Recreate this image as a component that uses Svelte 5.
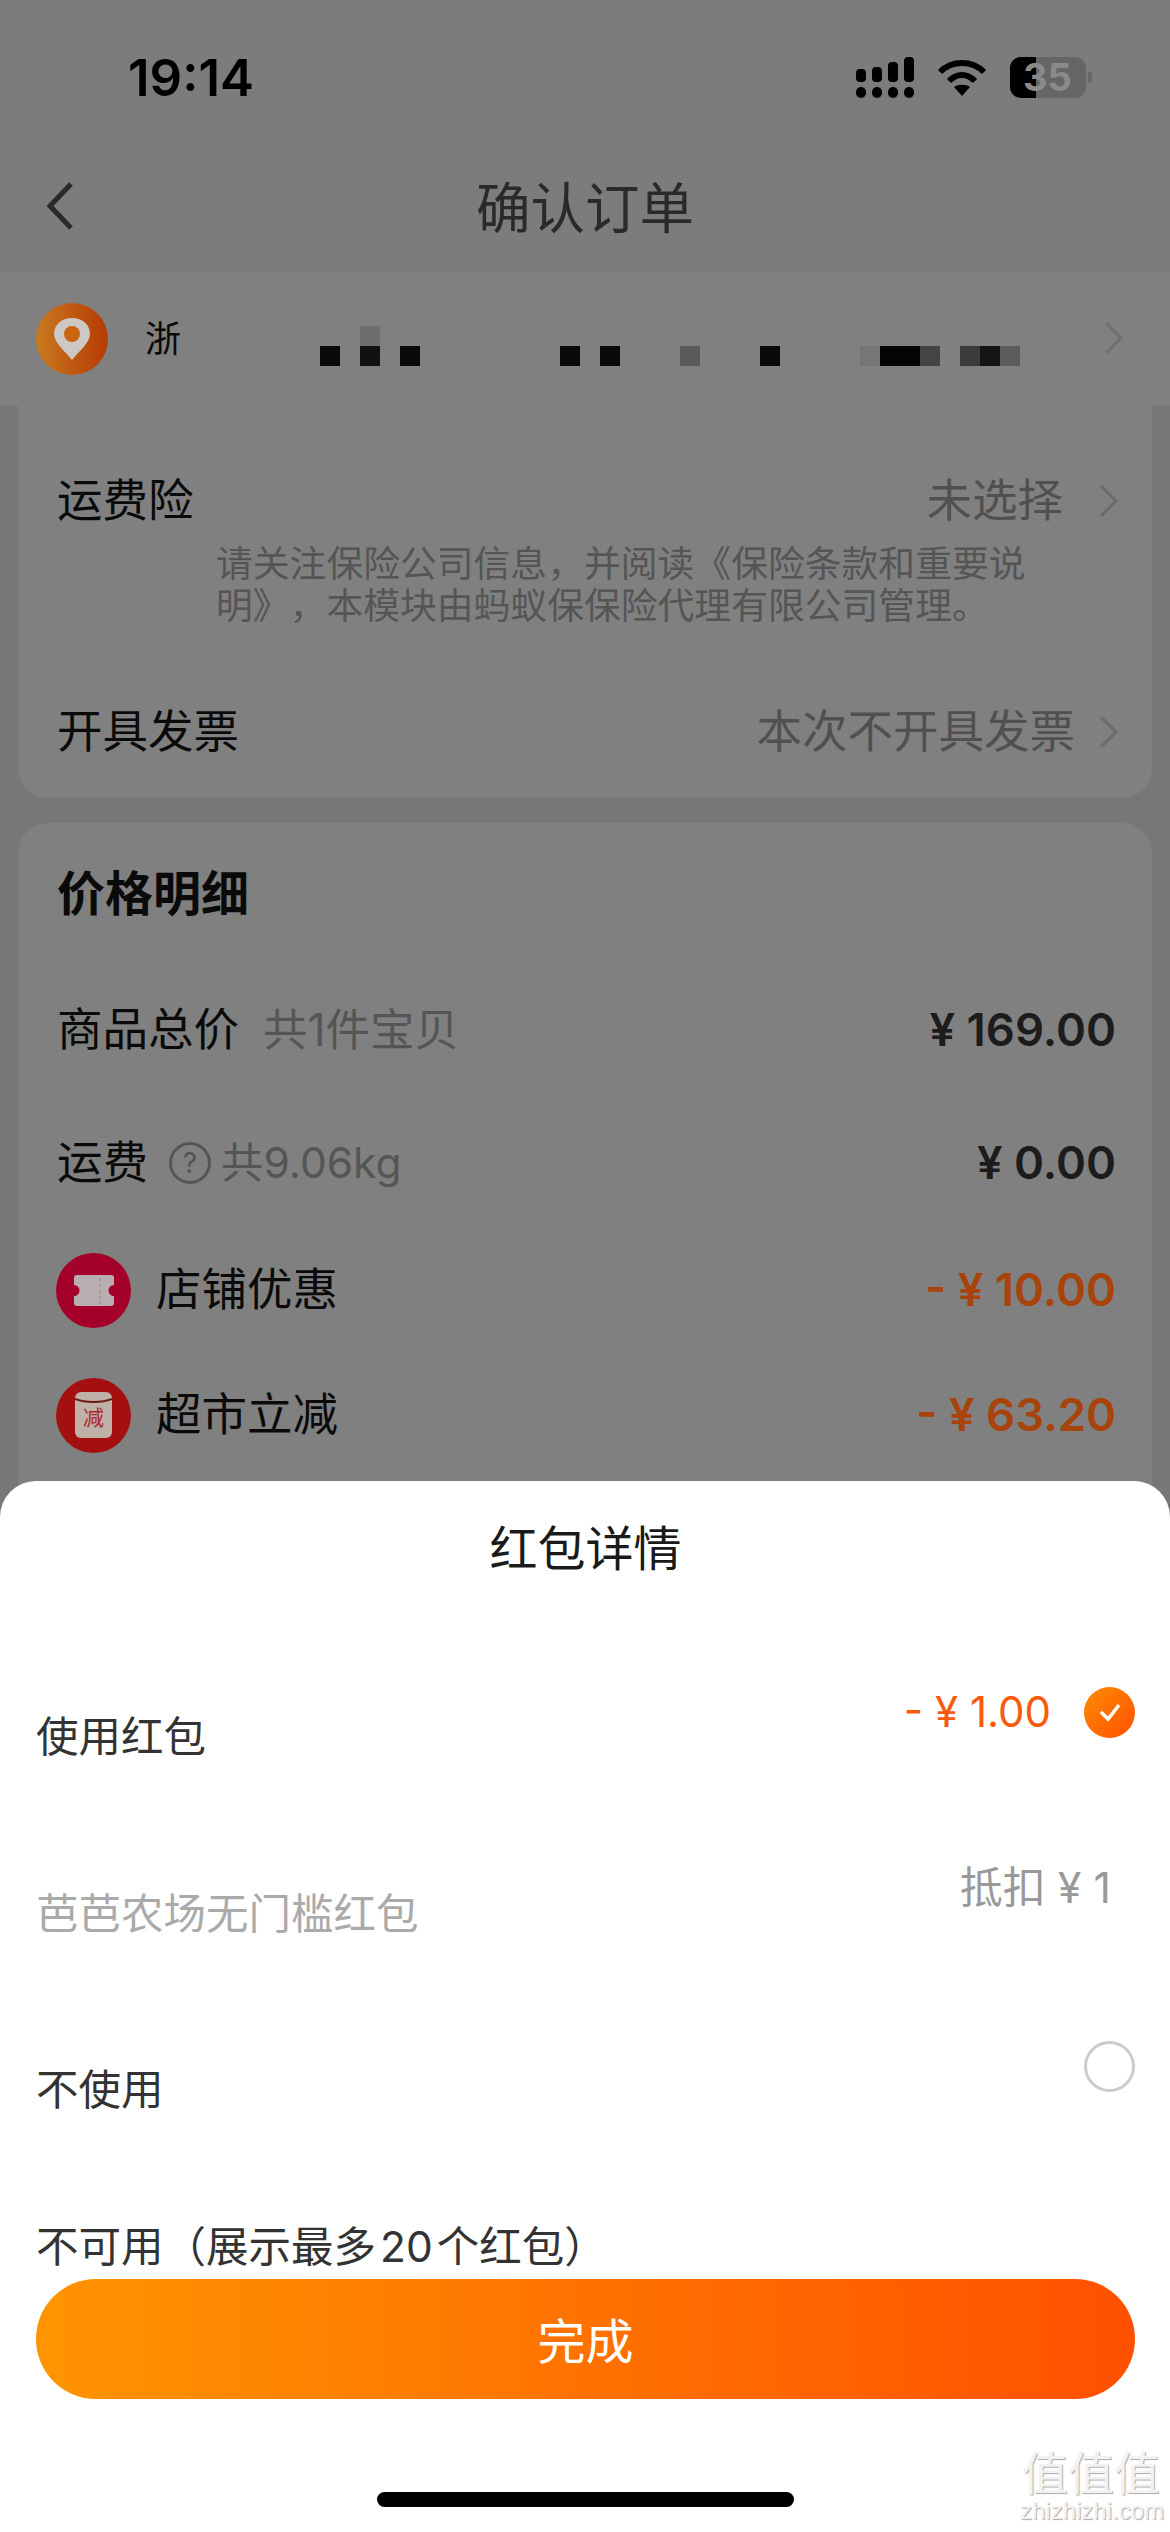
<script>
  // mosaic blocks over the blurred-out address: [x, y, width, colour]
  const blocks = [
    [0, 20, 20, '#0a0a0a'], [40, 0, 20, '#6e6e6e'], [40, 20, 20, '#111'], [80, 20, 20, '#0a0a0a'],
    [240, 20, 20, '#0a0a0a'], [280, 20, 20, '#0a0a0a'], [360, 20, 20, '#5a5a5a'], [440, 20, 20, '#0a0a0a'],
    [540, 20, 20, '#767676'], [560, 20, 40, '#050505'], [600, 20, 20, '#444'],
    [640, 20, 20, '#3c3c3c'], [660, 20, 20, '#151515'], [680, 20, 20, '#5c5c5c']
  ];
</script>

<div class="page">
  <div class="status">
    <span class="time">19:14</span>
    <div class="status-icons">
      <svg class="signal" width="58" height="41" viewBox="0 0 58 41">
        <rect x="0" y="12" width="10" height="13" rx="4"/>
        <rect x="16" y="10" width="10" height="15" rx="4"/>
        <rect x="32" y="5" width="10" height="20" rx="4"/>
        <rect x="48" y="0" width="10" height="25" rx="4"/>
        <rect x="0" y="30" width="10" height="11" rx="5"/>
        <rect x="16" y="30" width="10" height="11" rx="5"/>
        <rect x="32" y="30" width="10" height="11" rx="5"/>
        <rect x="48" y="30" width="10" height="11" rx="5"/>
      </svg>
      <svg class="wifi" width="50" height="38" viewBox="0 0 50 38">
        <path d="M3 14C15 2 35 2 47 14" fill="none" stroke="#000" stroke-width="6"/>
        <path d="M12 23C20 15 30 15 38 23" fill="none" stroke="#000" stroke-width="6"/>
        <path d="M17 29C21 26 29 26 33 29L25 38Z" fill="#000"/>
      </svg>
      <div class="battery">
        <div class="battery-fill"></div>
        <span class="battery-num">35</span>
        <div class="battery-nub"></div>
      </div>
    </div>
  </div>

  <div class="nav">
    <svg class="back" width="28" height="48" viewBox="0 0 28 48">
      <path d="M25 2L4 24L25 46" fill="none" stroke="#2a2a2a" stroke-width="5"/>
    </svg>
    <span class="nav-title">确认订单</span>
  </div>

  <div class="address">
    <div class="pin-badge">
      <svg width="36" height="42" viewBox="0 0 36 42">
        <path d="M18 0C7 0 0 7 0 16C0 25 12 34 18 42C24 34 36 25 36 16C36 7 29 0 18 0Z" fill="#cdc8c4"/>
        <circle cx="18" cy="16" r="8" fill="#c9640f"/>
      </svg>
    </div>
    <span class="addr-name">浙</span>
    <svg class="mosaic" width="700" height="40" viewBox="0 0 700 40">
      {#each blocks as b}
        <rect x={b[0]} y={b[1]} width={b[2]} height="20" fill={b[3]}/>
      {/each}
    </svg>
    <svg class="addr-arrow" width="20" height="34" viewBox="0 0 20 34">
      <path d="M2 2L17 17L2 32" fill="none" stroke="#707070" stroke-width="3"/>
    </svg>
  </div>

  <div class="card card-top">
    <div class="row first">
      <span class="label">运费险</span>
      <span class="value">未选择
        <svg class="arrow" width="20" height="34" viewBox="0 0 20 34"><path d="M2 2L17 17L2 32" fill="none" stroke="#6a6a6a" stroke-width="3"/></svg>
      </span>
    </div>
    <p class="note">请关注保险公司信息，并阅读《保险条款和重要说<br>明》，本模块由蚂蚁保保险代理有限公司管理。</p>
    <div class="row invoice">
      <span class="label">开具发票</span>
      <span class="value">本次不开具发票
        <svg class="arrow" width="20" height="34" viewBox="0 0 20 34"><path d="M2 2L17 17L2 32" fill="none" stroke="#6a6a6a" stroke-width="3"/></svg>
      </span>
    </div>
  </div>

  <div class="card card-price">
    <h2>价格明细</h2>
    <div class="row r1">
      <span class="label">商品总价<span class="sub">共1件宝贝</span></span>
      <span class="price">¥ 169.00</span>
    </div>
    <div class="row r2">
      <span class="label">运费<span class="help">?</span><span class="sub tight">共9.06kg</span></span>
      <span class="price">¥ 0.00</span>
    </div>
    <div class="row r3">
      <span class="label">
        <span class="round crimson">
          <svg width="40" height="31" viewBox="0 0 40 31">
            <path d="M3 0H37A3 3 0 0 1 40 3V10A5.5 5.5 0 0 0 40 21V28A3 3 0 0 1 37 31H3A3 3 0 0 1 0 28V21A5.5 5.5 0 0 0 0 10V3A3 3 0 0 1 3 0Z" fill="#b8aeb0"/>
            <path d="M26 3V29" stroke="#a58a8f" stroke-width="1.5" stroke-dasharray="3 3"/>
          </svg>
        </span>
        店铺优惠
      </span>
      <span class="price discount">- ¥ 10.00</span>
    </div>
    <div class="row r4">
      <span class="label">
        <span class="round red">
          <svg width="37" height="46" viewBox="0 0 37 46">
            <rect width="37" height="46" rx="6" fill="#bfb0a8"/>
            <path d="M0 7C10 11 27 11 37 7" fill="none" stroke="#6e1a16" stroke-width="2"/>
            <text x="18.5" y="33" text-anchor="middle" class="env-text">减</text>
          </svg>
        </span>
        超市立减
      </span>
      <span class="price discount">- ¥ 63.20</span>
    </div>
  </div>

  <div class="sheet">
    <div class="sheet-title">红包详情</div>

    <div class="opt">
      <span class="opt-label">使用红包</span>
      <span class="opt-right">
        <span class="amount">- ¥ 1.00</span>
        <span class="check">
          <svg width="24" height="20" viewBox="0 0 24 20"><path d="M3 10L10 17L21 3" fill="none" stroke="#fff" stroke-width="3.5"/></svg>
        </span>
      </span>
    </div>

    <div class="opt">
      <span class="opt-label muted">芭芭农场无门槛红包</span>
      <span class="deduct">抵扣 ¥ 1</span>
    </div>

    <div class="opt third">
      <span class="opt-label">不使用</span>
      <span class="radio"></span>
    </div>

    <div class="unavailable">不可用（展示最多<span class="num">20</span>个红包）</div>

    <button class="done" type="button">完成</button>
    <div class="home-bar"></div>

    <div class="watermark">
      <div class="wm-mark">值值值</div>
      <div class="wm-url">zhizhizhi.com</div>
    </div>
  </div>
</div>

<style>
  :global(body) {
    margin: 0;
  }

  .page {
    position: relative;
    width: 1170px;
    height: 2532px;
    overflow: hidden;
    background: #777;
    font-family: "Inter", "Noto Sans CJK SC", sans-serif;
    color: #0a0a0a;
    text-spacing-trim: space-all;
  }

  /* status bar */
  .status {
    height: 154px;
    display: flex;
    align-items: center;
    justify-content: space-between;
    padding: 0 84px 0 128px;
    background: #7c7c7c;
  }
  .time {
    font-size: 51px;
    font-weight: 600;
    color: #000;
  }
  .status-icons {
    display: flex;
    align-items: center;
    gap: 23px;
  }
  .signal rect {
    fill: #000;
  }
  .battery {
    position: relative;
    width: 76px;
    height: 41px;
    border-radius: 11px;
    background: #666;
  }
  .battery-fill {
    width: 26px;
    height: 41px;
    background: #000;
    border-radius: 11px 0 0 11px;
  }
  .battery-num {
    position: absolute;
    left: 13px;
    top: 0;
    font-size: 38px;
    font-weight: 700;
    line-height: 41px;
    color: #8a8a8a;
  }
  .battery-nub {
    position: absolute;
    right: -6px;
    top: 15px;
    width: 4px;
    height: 11px;
    border-radius: 0 3px 3px 0;
    background: #666;
  }

  /* title bar */
  .nav {
    position: relative;
    height: 100px;
    padding-bottom: 18px;
    display: flex;
    align-items: center;
    justify-content: center;
    background: #7c7c7c;
  }
  .back {
    position: absolute;
    left: 46px;
    top: 28px;
  }
  .nav-title {
    font-size: 54.5px;
    color: #2a2a2a;
  }

  /* address */
  .address {
    height: 134px;
    display: flex;
    align-items: center;
    background: #808080;
    padding-left: 36px;
  }
  .pin-badge {
    width: 72px;
    height: 72px;
    border-radius: 50%;
    background: linear-gradient(90deg, #c87a1e, #b63a05);
    display: flex;
    align-items: center;
    justify-content: center;
  }
  .addr-name {
    width: 36px;
    margin-left: 37px;
    white-space: nowrap;
    font-size: 36px;
    line-height: 40px;
  }
  .mosaic {
    margin-left: 139px;
    margin-top: 14px;
  }
  .addr-arrow {
    margin-left: 84px;
    margin-top: -2px;
  }

  /* cards */
  .card {
    margin: 0 18px;
    background: #808080;
    padding: 0 33px 0 39px;
  }
  .card-top {
    height: 392px;
    box-sizing: border-box;
    border-radius: 0 0 30px 30px;
  }
  .card-price {
    margin-top: 25px;
    height: 800px;
    box-sizing: border-box;
    padding-top: 41px;
    border-radius: 30px 30px 0 0;
  }
  .row {
    height: 60px;
    display: flex;
    align-items: center;
    justify-content: space-between;
    line-height: 60px;
  }
  .first {
    padding-top: 65px;
  }
  .invoice {
    margin-top: 75px;
  }
  .label {
    display: flex;
    align-items: center;
    font-size: 45.5px;
  }
  .value {
    display: flex;
    align-items: center;
    font-size: 45.5px;
    color: #505050;
  }
  .arrow {
    margin-left: 36px;
  }
  .invoice .arrow {
    margin-left: 24px;
  }
  .note {
    margin: 12px 0 0 159px;
    font-size: 36.8px;
    line-height: 42px;
    color: #555;
    white-space: nowrap;
  }

  h2 {
    margin: 0;
    font-size: 48px;
    font-weight: 700;
    line-height: 60px;
    color: #0a0a0a;
  }
  .r1 {
    margin-top: 76px;
  }
  .r2 {
    margin-top: 73px;
  }
  .r3 {
    margin-top: 67px;
  }
  .r4 {
    margin-top: 65px;
  }
  .sub {
    margin-left: 24px;
    font-size: 44.5px;
    color: #555;
  }
  .sub.tight {
    margin-left: 10px;
    font-size: 42.5px;
  }
  .help {
    width: 36px;
    height: 36px;
    margin-left: 21px;
    border: 3px solid #555;
    border-radius: 50%;
    display: flex;
    align-items: center;
    justify-content: center;
    font-size: 28px;
    color: #555;
  }
  .price {
    margin-right: 3px;
    font-size: 45.5px;
    font-weight: 600;
    color: #1c1c1c;
  }
  .discount {
    color: #a8430c;
  }
  .round {
    width: 75px;
    height: 75px;
    margin-right: 25px;
    margin-left: -1px;
    border-radius: 50%;
    display: flex;
    align-items: center;
    justify-content: center;
  }
  .crimson {
    background: #a3002a;
  }
  .red {
    background: #a3100f;
  }
  .env-text {
    font-size: 21px;
    fill: #a82826;
  }

  /* bottom sheet */
  .sheet {
    position: absolute;
    left: 0;
    right: 0;
    top: 1481px;
    bottom: 0;
    padding: 34px 35px 0 36px;
    background: #fff;
    border-radius: 36px 36px 0 0;
  }
  .sheet-title {
    height: 56px;
    padding-top: 4px;
    padding-bottom: 107px;
    text-align: center;
    font-size: 48px;
    line-height: 60px;
    color: #1a1a1a;
  }
  .opt {
    height: 84px;
    margin-bottom: 93px;
    display: flex;
    align-items: flex-start;
    justify-content: space-between;
    line-height: 60px;
  }
  .third {
    margin-bottom: 95px;
  }
  .opt-label {
    margin-top: 25px;
    font-size: 42.5px;
    color: #333;
  }
  .third .opt-label {
    margin-top: 24px;
  }
  .muted {
    color: #aaa;
  }
  .opt-right {
    display: flex;
    align-items: center;
    gap: 33px;
    height: 60px;
  }
  .amount {
    font-size: 42px;
    font-weight: 400;
    color: #fa5a0c;
  }
  .check {
    width: 51px;
    height: 51px;
    border-radius: 50%;
    background: linear-gradient(135deg, #ff8c00, #ff5000);
    display: flex;
    align-items: center;
    justify-content: center;
  }
  .deduct {
    margin-right: 24px;
    margin-top: -2px;
    font-size: 43px;
    color: #999;
  }
  .radio {
    width: 51px;
    height: 51px;
    box-sizing: border-box;
    border: 3px solid #ccc;
    border-radius: 50%;
    margin-top: 5px;
  }
  .unavailable {
    height: 60px;
    margin-bottom: 4px;
    font-size: 42.5px;
    line-height: 64px;
    color: #333;
    white-space: nowrap;
  }
  .num {
    margin: 0 4px;
  }
  .done {
    display: block;
    width: 1099px;
    height: 120px;
    padding: 0 0 3px;
    border: none;
    border-radius: 60px;
    background: linear-gradient(90deg, #ff9400, #ff5000);
    font-family: inherit;
    font-size: 48px;
    color: #fff;
  }
  .home-bar {
    width: 417px;
    height: 15px;
    margin: 93px auto 0;
    border-radius: 8px;
    background: #000;
  }
  .watermark {
    position: absolute;
    right: 8px;
    bottom: 8px;
    width: 142px;
    text-align: center;
    color: #f2f2f2;
    text-shadow: 1px 1px 1px #aaa;
  }
  .wm-mark {
    font-size: 46px;
    line-height: 50px;
  }
  .wm-url {
    font-family: "Liberation Sans", sans-serif;
    font-size: 24px;
    line-height: 26px;
  }
</style>
